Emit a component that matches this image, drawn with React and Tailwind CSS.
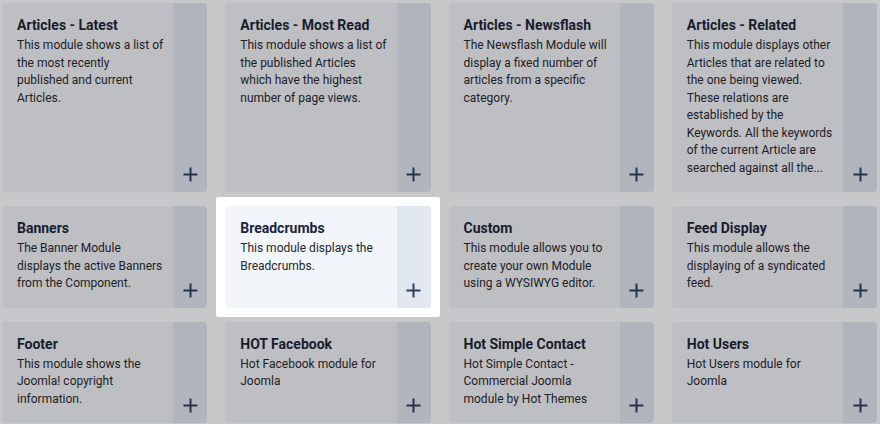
import React from 'react';

const modules = [
  { title: 'Articles - Latest', desc: 'This module shows a list of the most recently published and current Articles.' },
  { title: 'Articles - Most Read', desc: 'This module shows a list of the published Articles which have the highest number of page views.' },
  { title: 'Articles - Newsflash', desc: 'The Newsflash Module will display a fixed number of articles from a specific category.' },
  { title: 'Articles - Related', desc: 'This module displays other Articles that are related to the one being viewed. These relations are established by the Keywords. All the keywords of the current Article are searched against all the...' },
  { title: 'Banners', desc: 'The Banner Module displays the active Banners from the Component.' },
  { title: 'Breadcrumbs', desc: 'This module displays the Breadcrumbs.', active: true },
  { title: 'Custom', desc: 'This module allows you to create your own Module using a WYSIWYG editor.' },
  { title: 'Feed Display', desc: 'This module allows the displaying of a syndicated feed.' },
  { title: 'Footer', desc: 'This module shows the Joomla! copyright information.' },
  { title: 'HOT Facebook', desc: 'Hot Facebook module for Joomla' },
  { title: 'Hot Simple Contact', desc: 'Hot Simple Contact - Commercial Joomla module by Hot Themes' },
  { title: 'Hot Users', desc: 'Hot Users module for Joomla' },
];

const Plus = () => (
  <svg width="15" height="15" viewBox="0 0 15 15" fill="none" stroke="currentColor" strokeWidth="2">
    <path d="M7.5 0.5v14M0.5 7.5h14" />
  </svg>
);

const ModuleCard = ({ title, desc, active }) => {
  const card = (
    <div className={'flex h-full rounded-[4px] overflow-hidden ' + (active ? 'bg-[#f2f5fa]' : 'bg-[#bebfc3]')}>
      <div className="flex-1 pl-[15px] pr-[10px] pt-[12px] pb-[15px]">
        <h3 className={'text-[14px] leading-[20px] font-bold ' + (active ? 'text-[#1b2540]' : 'text-[#161d2e]')}>
          {title}
        </h3>
        <p className={'mt-[2px] text-[12px] leading-[17.5px] ' + (active ? 'text-[#24282d]' : 'text-[#1d2024]')}>
          {desc}
        </p>
      </div>
      <div
        className={
          'w-[34px] shrink-0 flex items-end justify-center pb-[10px] ' +
          (active ? 'bg-[#e2e8f2] text-[#2c3d5e]' : 'bg-[#b1b5be] text-[#263249]')
        }
      >
        <Plus />
      </div>
    </div>
  );
  if (!active) return card;
  // spotlighted card sits in a white frame over the dimmed page
  return <div className="relative z-10 -m-[9px] p-[9px] bg-white rounded-[2px]">{card}</div>;
};

export default function App() {
  return (
    <div
      className="h-[424px] overflow-hidden bg-[#c8c8ca]"
      style={{ fontFamily: 'Roboto, "Liberation Sans", sans-serif' }}
    >
      <div className="grid grid-cols-4 gap-x-[18px] gap-y-[14px] pl-[2px] pr-[3px] pt-[3px]">
        {modules.map((m) => (
          <ModuleCard key={m.title} {...m} />
        ))}
      </div>
    </div>
  );
}
